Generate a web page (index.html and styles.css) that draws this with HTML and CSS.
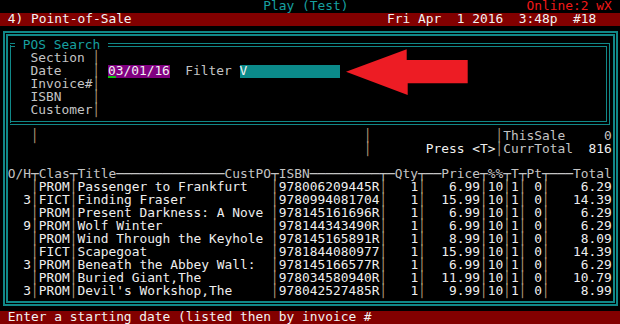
FILE: index.html
```html
<!DOCTYPE html>
<html>

<head>
  <title>Point-of-Sale</title>
  <meta name="viewport" content="width=device-width, initial-scale=1.0">
  <link rel="stylesheet" href="styles.css">
</head>

<body>
  <div class="screen">
    <div class="line">                                  <span class="teal">Play (Test)</span>                       <span class="red">Online:2 wX</span></div>
    <div class="line bar-red"> 4) Point-of-Sale                                 Fri Apr  1 2016  3:48p  #18</div>

    <div class="outer">
      <fieldset class="search">
        <legend>POS Search</legend>
        <div class="line">  Section <i>│</i></div>
        <div class="line">  Date    <i>│</i> <span class="date"><span class="cursor">0</span>3/01/16</span>  Filter <span class="field">V            </span></div>
        <div class="line">  Invoice#<i>│</i></div>
        <div class="line">  ISBN    <i>│</i></div>
        <div class="line">  Customer<i>│</i></div>
      </fieldset>

      <div class="line">   <i>│</i>                                          <i>│</i>                <i>│</i>ThisSale     0</div>
      <div class="line">                                              <i>│</i>       <b>Press &lt;T&gt;</b><i>│</i>CurrTotal  <b>816</b></div>
      <div class="line"></div>

      <div class="line head">O/H┬Clas┬Title──────────────CustPO┬ISBN─────────┬─Qty┬──Price┬%%┬T┬Pt┬───Total</div>
      <div class="rows">
        <div class="line">   <i>│</i>PROM<i>│</i>Passenger to Frankfurt   <i>│</i>978006209445R<i>│</i>   1<i>│</i>   6.99<i>│</i>10<i>│</i>1<i>│</i> 0<i>│</i>    6.29</div>
        <div class="line">  3<i>│</i>FICT<i>│</i>Finding Fraser           <i>│</i>9780994081704<i>│</i>   1<i>│</i>  15.99<i>│</i>10<i>│</i>1<i>│</i> 0<i>│</i>   14.39</div>
        <div class="line">   <i>│</i>PROM<i>│</i>Present Darkness: A Nove <i>│</i>978145161696R<i>│</i>   1<i>│</i>   6.99<i>│</i>10<i>│</i>1<i>│</i> 0<i>│</i>    6.29</div>
        <div class="line">  9<i>│</i>PROM<i>│</i>Wolf Winter              <i>│</i>978144343490R<i>│</i>   1<i>│</i>   6.99<i>│</i>10<i>│</i>1<i>│</i> 0<i>│</i>    6.29</div>
        <div class="line">   <i>│</i>PROM<i>│</i>Wind Through the Keyhole <i>│</i>978145165891R<i>│</i>   1<i>│</i>   8.99<i>│</i>10<i>│</i>1<i>│</i> 0<i>│</i>    8.09</div>
        <div class="line">   <i>│</i>FICT<i>│</i>Scapegoat                <i>│</i>9781844080977<i>│</i>   1<i>│</i>  15.99<i>│</i>10<i>│</i>1<i>│</i> 0<i>│</i>   14.39</div>
        <div class="line">  3<i>│</i>PROM<i>│</i>Beneath the Abbey Wall:  <i>│</i>978145166577R<i>│</i>   1<i>│</i>   6.99<i>│</i>10<i>│</i>1<i>│</i> 0<i>│</i>    6.29</div>
        <div class="line">   <i>│</i>PROM<i>│</i>Buried Giant,The         <i>│</i>978034580940R<i>│</i>   1<i>│</i>  11.99<i>│</i>10<i>│</i>1<i>│</i> 0<i>│</i>   10.79</div>
        <div class="line">  3<i>│</i>PROM<i>│</i>Devil's Workshop,The     <i>│</i>978042527485R<i>│</i>   1<i>│</i>   9.99<i>│</i>10<i>│</i>1<i>│</i> 0<i>│</i>    8.99</div>
      </div>
    </div>

    <div class="line bar-red"> Enter a starting date (listed then by invoice #</div>

    <!-- callout arrow pointing at the filter field -->
    <svg class="arrow" viewBox="0 0 126 50" width="126" height="50">
      <polygon points="2,24.7 62.7,2.3 62.7,13 123.7,13 123.7,36.3 63.7,36.3 63.7,48" fill="#ed1c24" />
    </svg>
  </div>
</body>

</html>
```

FILE: styles.css
```css
body {
  margin: 0;
  background: #000;
}

.screen {
  position: relative;
  width: 620px;
  height: 324px;
  overflow: hidden;
  background: #000;
  color: #c4c4c4;
  font-family: "DejaVu Sans Mono", monospace;
  font-size: 12.87px;
  line-height: 12.96px;
}

.line {
  height: 12.96px;
  white-space: pre;
}

.line i {
  font-style: normal;
  color: #ad9878;
}

.line b {
  font-weight: normal;
  color: #efefef;
}

.teal {
  color: #17a0a0;
}

.red {
  color: #f01818;
}

.bar-red {
  background: #820000;
  color: #f2f2f2;
}

/* outer double frame, rows 2-23 */
.outer {
  margin: 5.08px 2.5px 4.56px;
  border: 5px double #118888;
  padding: 2.9px 0.25px 3.4px;
}

.search {
  margin: 0 2.75px 4.1px 1.75px;
  padding: 0 1px 4.86px 4.5px;
  border-style: double double double solid;
  border-width: 4px 4px 4px 1.5px;
  border-color: #118888;
  min-inline-size: 0;
}

.search legend {
  padding: 0 7.75px;
  color: #17a0a0;
  line-height: 12.96px;
}

.date,
.field {
  display: inline-block;
  height: 12.96px;
  line-height: 12.96px;
  vertical-align: top;
  color: #f2f2f2;
}

.date {
  background: #800080;
}

.cursor {
  box-shadow: inset 0 -2px #10c010;
}

.field {
  background: #0b8a8a;
}

.head {
  color: #c4c4c4;
}

.rows {
  color: #eeeeee;
}

.arrow {
  position: absolute;
  left: 344px;
  top: 47px;
}
```
